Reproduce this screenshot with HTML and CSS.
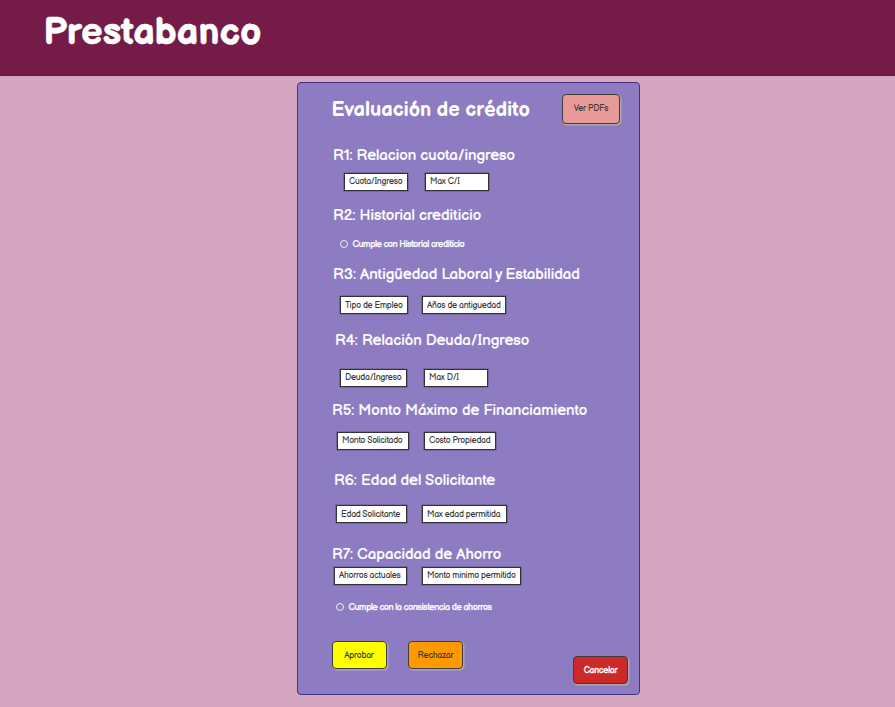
FILE: index.html
```html
<!DOCTYPE html>
<html lang="es">
<head>
<meta charset="utf-8">
<title>Prestabanco</title>
<link rel="stylesheet" href="styles.css">
</head>
<body>
<header class="topbar"><h1>Prestabanco</h1></header>
<main class="panel">
  <div class="panel-head">
    <h2>Evaluación de crédito</h2>
    <button class="btn btn-pdf">Ver PDFs</button>
  </div>
  <section class="rule r1">
    <h3>R1: Relacion cuota/ingreso</h3>
    <div class="fields"><span class="field">Cuota/Ingreso</span><span class="field">Max C/I</span></div>
  </section>
  <section class="rule r2">
    <h3>R2: Historial crediticio</h3>
    <div class="option"><i class="radio"></i><span>Cumple con Historial crediticio</span></div>
  </section>
  <section class="rule r3">
    <h3>R3: Antigüedad Laboral y Estabilidad</h3>
    <div class="fields"><span class="field">Tipo de Empleo</span><span class="field">Años de antiguedad</span></div>
  </section>
  <section class="rule r4">
    <h3>R4: Relación Deuda/Ingreso</h3>
    <div class="fields"><span class="field">Deuda/Ingreso</span><span class="field">Max D/I</span></div>
  </section>
  <section class="rule r5">
    <h3>R5: Monto Máximo de Financiamiento</h3>
    <div class="fields"><span class="field">Monto Solicitado</span><span class="field">Costo Propiedad</span></div>
  </section>
  <section class="rule r6">
    <h3>R6: Edad del Solicitante</h3>
    <div class="fields"><span class="field">Edad Solicitante</span><span class="field">Max edad permitida</span></div>
  </section>
  <section class="rule r7">
    <h3>R7: Capacidad de Ahorro</h3>
    <div class="fields"><span class="field">Ahorros actuales</span><span class="field">Monto minimo permitido</span></div>
    <div class="option"><i class="radio"></i><span>Cumple con la consistencia de ahorros</span></div>
  </section>
  <div class="actions">
    <button class="btn btn-ok">Aprobar</button>
    <button class="btn btn-reject">Rechazar</button>
    <button class="btn btn-cancel">Cancelar</button>
  </div>
</main>
</body>
</html>
```
FILE: styles.css
```css
* { box-sizing: border-box; }
body {
  margin: 0;
  height: 707px;
  overflow: hidden;
  background: #d6a5bf;
  color: #fff;
  font-family: "Balsamiq Sans", Inter, sans-serif;
  font-feature-settings: "cv11";
}
h1, h2, h3 { margin: 0; white-space: nowrap; }
.topbar {
  height: 76px;
  padding: 10px 0 0 43.5px;
  background: #741b47;
  border-bottom: 1px solid #4b2a3c;
}
h1 { font-size: 37.6px; line-height: 46px; font-weight: 700; -webkit-text-stroke: 0.5px #fff; }
.panel {
  width: 343px;
  height: 613px;
  margin: 6px 0 0 297px;
  background: #8e7cc3;
  border: 1px solid #433080;
  border-radius: 4px;
}
.panel-head {
  display: flex;
  justify-content: space-between;
  height: 64px;
  padding: 11px 19px 0 33.5px;
}
h2 { font-size: 20px; line-height: 32px; font-weight: 700; }
.btn {
  width: 55px;
  height: 28px;
  padding: 0;
  border: 1px solid #403a42;
  border-radius: 4px;
  box-shadow: 1px 1px 0 0.5px #aaa5ad;
  font: inherit;
  font-size: 8.6px;
  letter-spacing: -0.2px;
  white-space: nowrap;
  color: #3a3a3a;
}
.btn-pdf { width: 58px; height: 30px; background: #ea9999; padding-bottom: 2px; }
.rule { padding-left: 35px; }
h3 {
  font-size: 15px;
  line-height: 18px;
  font-weight: 500;
  -webkit-text-stroke: 0.2px #fff;
}
.fields { display: flex; }
.field {
  height: 18px;
  padding-left: 4px;
  border: 1px solid #34313a;
  box-shadow: 0 0 0.5px 0.3px #34313a;
  background: #fff;
  color: #3a3a3a;
  font-size: 8.6px;
  letter-spacing: -0.23px;
  line-height: 16px;
  white-space: nowrap;
}
.option {
  display: flex;
  align-items: center;
  gap: 4.5px;
  height: 12px;
  font-size: 9px;
  letter-spacing: -0.4px;
  -webkit-text-stroke: 0.25px #fff;
  white-space: nowrap;
}
.radio { width: 8px; height: 8px; border: 1px solid #eee; border-radius: 50%; }
.r1 { height: 60px; }
.r1 .fields { margin: 8px 0 0 11px; gap: 17px; }
.r1 .field { width: 64px; }
.r2 { height: 59px; }
.r2 .option { margin: 13px 0 0 7px; }
.r3 { height: 66px; }
.r3 .fields { margin: 12px 0 0 7px; gap: 14px; }
.r3 .field { width: 68px; }
.r3 .field + .field { width: 84px; }
.r3 .field, .r6 .field { line-height: 17px; }
.r4 { height: 70px; padding-left: 37px; }
.r4 .fields { margin: 19px 0 0 5px; gap: 17px; }
.r4 .field { width: 67px; }
.r4 .field + .field { width: 64px; }
.r5 { height: 70px; padding-left: 34px; }
.r5 .fields { margin: 12px 0 0 5px; gap: 15px; }
.r5 .field { width: 72px; }
.r6 { height: 74px; padding-left: 36px; }
.r6 .fields { margin: 15px 0 0 2px; gap: 15px; }
.r6 .field { width: 71px; }
.r6 .field + .field { width: 85px; }
.r7 { height: 95px; padding-left: 34px; }
.r7 .fields { margin: 3px 0 0 2px; gap: 15px; }
.r7 .field { width: 73px; }
.r7 .field + .field { width: 99px; }
.r7 .option { margin: 16px 0 0 4px; }
.actions { display: flex; padding-left: 33.5px; }
.btn-ok { background: #ff0; }
.btn-reject { background: #ff9900; margin-left: 21.5px; }
.btn-cancel { background: #cc2929; color: #fff; margin: 15px 0 0 110px; -webkit-text-stroke: 0.3px #fff; }
```
